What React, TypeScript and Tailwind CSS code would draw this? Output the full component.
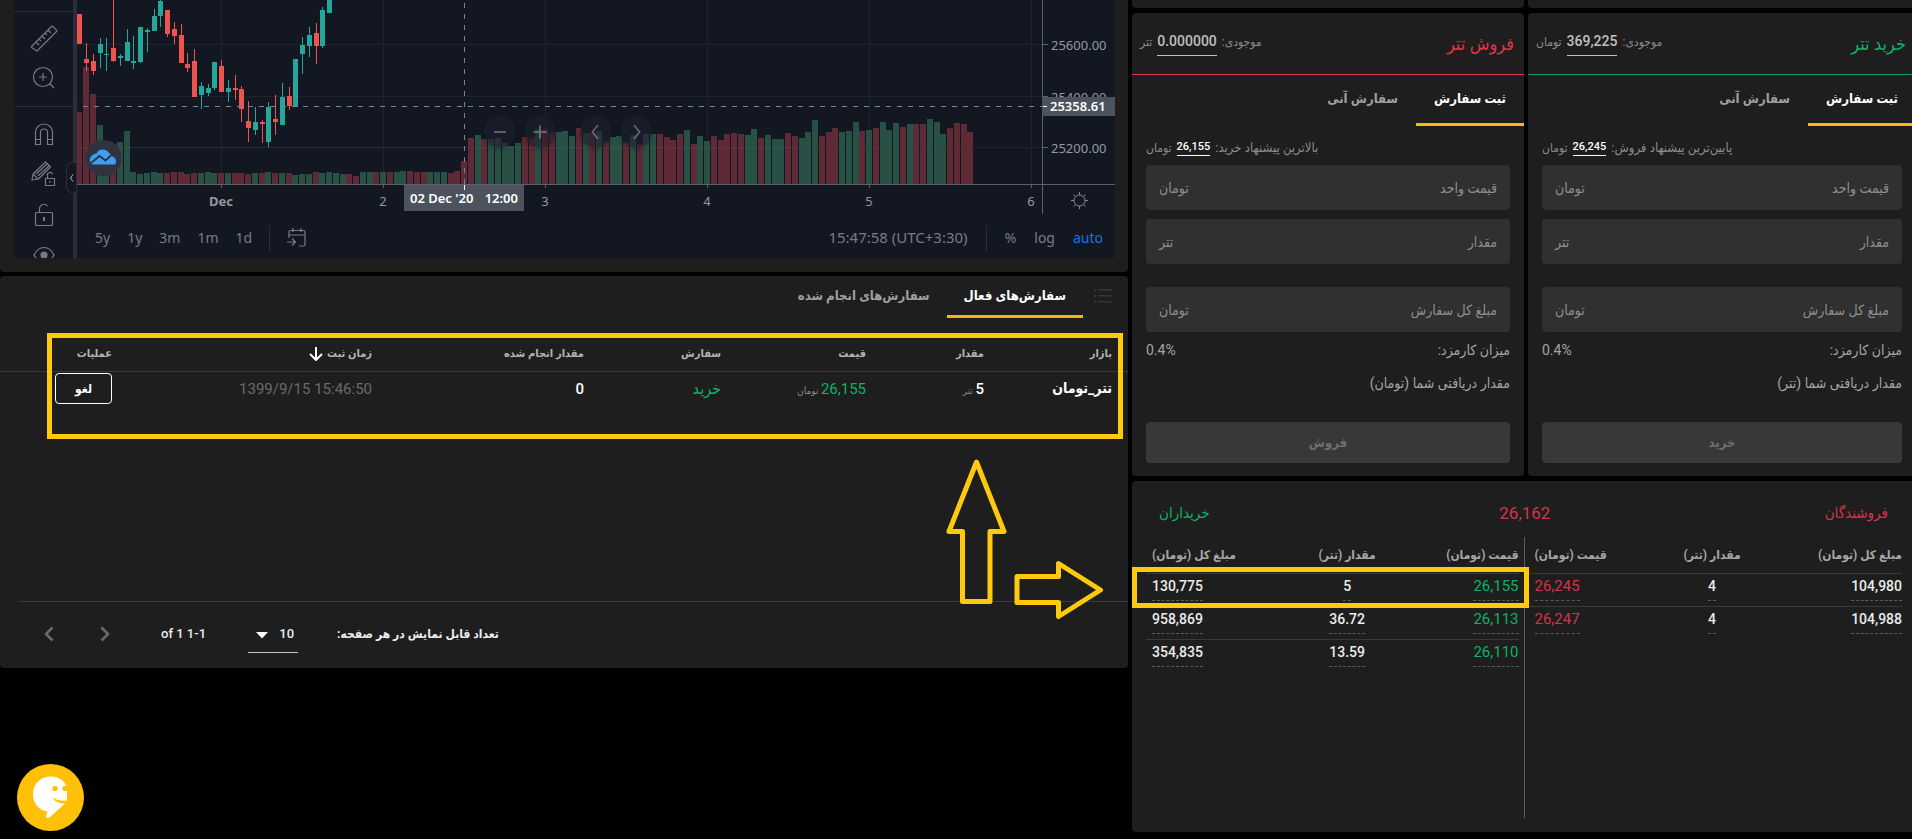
import React from 'react';

const VOLUME =
  'r336 r201 r282 g375 g440 r432 g426 g393 g516 g522 g519 g516 g519 r519 r516 r516 r522 r519 g519 g516 g519 r519 g519 r519 r519 r522 g519 r519 g516 r519 g519 r519 g525 g522 g522 r516 g519 g516 g519 g522 r522 r528 g516 g516 r516 g516 r516 g516 g513 r513 r516 r516 g516 g516 g516 r519 r513 r483 r414 g405 r417 g417 g414 g429 g438 g429 r411 r414 g387 r387 r399 g396 g393 g408 r384 g399 r399 g393 r423 g411 g408 r426 g405 r432 g402 g402 r402 r411 r420 r402 g390 r432 g408 g423 r408 r420 r402 r399 r402 g405 g387 r414 g405 g417 g417 r399 r408 g414 g396 g360 r408 r396 r384 g396 g393 g366 r393 g390 r384 g366 g390 g369 r381 g372 r372 r372 g357 g366 g402 r384 r369 r372 r396'.split(
    ' ',
  );

// [direction, body top, body bottom, wick top, wick bottom], in thirds of a pixel
const CANDLES: [string, number, number, number, number][] = [
  ['r', 42, 132, 42, 132], ['r', 177, 189, 129, 213], ['r', 183, 213, 162, 225], ['g', 132, 159, 114, 204],
  ['g', 161, 164, 114, 213], ['r', 144, 183, 0, 186], ['g', 168, 174, 162, 198], ['g', 126, 183, 87, 183],
  ['g', 183, 189, 108, 207], ['g', 81, 186, 81, 189], ['g', 90, 96, 84, 156], ['g', 48, 93, 27, 93],
  ['g', 3, 48, 0, 81], ['r', 30, 102, 30, 111], ['r', 87, 108, 66, 132], ['r', 105, 189, 72, 189],
  ['r', 192, 204, 159, 216], ['r', 183, 291, 147, 291], ['g', 258, 285, 246, 327], ['g', 264, 279, 252, 288],
  ['g', 186, 264, 186, 270], ['r', 198, 276, 180, 276], ['g', 264, 276, 240, 306], ['r', 264, 270, 225, 300],
  ['r', 267, 327, 258, 366], ['r', 363, 384, 303, 426], ['g', 366, 390, 321, 405], ['r', 366, 372, 360, 429],
  ['g', 321, 426, 306, 441], ['r', 357, 366, 285, 405], ['g', 291, 375, 249, 375], ['r', 288, 318, 261, 330],
  ['g', 177, 321, 177, 321], ['g', 135, 162, 111, 222], ['g', 105, 138, 81, 171], ['r', 99, 138, 69, 192],
  ['g', 30, 138, 21, 144], ['g', 0, 39, 0, 39],
];

const barX = (k: number) => Math.round(2.25 + 6.75 * k);
const DAYS: [number, string][] = [
  [144, 'Dec'], [306, '2'], [468, '3'], [630, '4'], [792, '5'], [954, '6'],
];
const PRICES: [number, string][] = [
  [44, '25600.00'], [96, '25400.00'], [147, '25200.00'],
];

function PriceChart() {
  return (
    <svg className="block h-[214px] w-full [font-family:'Noto_Sans',sans-serif]" fontSize="13" fill="#9598a1" role="img" aria-label="USDT price chart">
      <g shapeRendering="crispEdges">
        {PRICES.map(([y]) => (
          <rect key={y} x="0" y={y} width="965" height="1" fill="#1f232e" />
        ))}
        {DAYS.map(([x]) => (
          <rect key={x} x={x} y="0" width="1" height="184" fill="#1f232e" />
        ))}
        {VOLUME.map((v, k) => {
          const top = Math.round(Number(v.slice(1)) / 3);
          return <rect key={k} x={barX(k) - 3} y={top} width="6" height={184 - top} fill={v[0] === 'r' ? '#5d2a35' : '#285045'} />;
        })}
        <rect x="0" y="147" width="720" height="1" fill="#fff" opacity="0.05" />
        {CANDLES.map(([d, t, b, wt, wb], k) => {
          const c = d === 'r' ? '#ef5350' : '#26a69a';
          return (
            <g key={k} fill={c}>
              <rect x={barX(k)} y={Math.round(wt / 3)} width="1" height={Math.round((wb - wt) / 3)} />
              <rect x={barX(k) - 2} y={Math.round(t / 3)} width="5" height={Math.max(1, Math.round((b - t) / 3))} />
            </g>
          );
        })}
        <path d="M0 106.5H965" stroke="#758696" strokeDasharray="5 6" strokeDashoffset="5" />
        <path d="M387.5 3V184" stroke="#758696" strokeDasharray="5 6" />
        <rect x="0" y="184" width="1038" height="1" fill="#5d606b" />
        <rect x="965" y="0" width="1" height="214" fill="#5d606b" />
        {DAYS.map(([x]) => (
          <rect key={x} x={x} y="185" width="1" height="3" fill="#5d606b" />
        ))}
        {PRICES.map(([y]) => (
          <rect key={y} x="966" y={y} width="5" height="1" fill="#5d606b" />
        ))}
      </g>
      {DAYS.map(([x, t]) => (
        <text key={t} x={x} y="206" textAnchor="middle" fontWeight={t === 'Dec' ? 700 : 400}>{t}</text>
      ))}
      {PRICES.map(([y, t]) => (
        <text key={t} x="974" y={y + 6}>{t}</text>
      ))}
      <rect x="965" y="97" width="73" height="19" fill="#4c525e" />
      <rect x="966" y="106" width="4" height="1" fill="#fff" />
      <text x="973" y="111" fill="#fff" fontWeight="600">25358.61</text>
      <rect x="327" y="185" width="120" height="26" fill="#4c525e" />
      <rect x="387" y="185" width="1" height="5" fill="#fff" />
      <text x="333" y="203" fill="#fff" fontWeight="600">02 Dec '20</text>
      <text x="441" y="203" fill="#fff" fontWeight="600" textAnchor="end">12:00</text>
      <g stroke="#868993" fill="none">
        <circle cx="1002.500" cy="200.500" r="5.500" />
        <path d="M1002.500 192v3M1002.500 206v3M994 200.500h3M1008 200.500h3M996.500 194.500l2 2M1006.500 204.500l2 2M996.500 206.500l2-2M1006.500 196.500l2-2" />
      </g>
      <circle cx="26.500" cy="158" r="18" fill="#2f3241" />
      <path d="M15 164.500a6 6 0 0 1 1.500-10 4 4 0 0 1 3-1 7 7 0 0 1 12.500-.5 5.500 5.500 0 0 1 3.500 3.500 5 5 0 0 1 2.500 8z" fill="#3ba0f3" />
      <path d="m14 163 8.500-7 6 4.500 7-6.500" fill="none" stroke="#2f3241" strokeWidth="1.800" />
    </svg>
  );
}

function ToolButton({ label, children }: { label: string; children: React.ReactNode }) {
  return (
    <button aria-label={label} className="flex h-10 w-full shrink-0 items-center justify-center text-[#787b86]">
      <svg width="28" height="28" viewBox="0 0 28 28" fill="none" stroke="currentColor" strokeWidth="1.200" strokeLinejoin="round">
        {children}
      </svg>
    </button>
  );
}

function DrawingToolbar() {
  return (
    <div className="relative h-[258px] w-[63px] shrink-0 border-r-4 border-[#2a2e39]">
      <div className="h-full overflow-hidden">
        <div className="mt-[11px] border-y border-[#2a2e39] pt-[6px] pb-[8px]">
          <ToolButton label="Ruler">
            <path d="M1.500 22.500 21.500 2.500a1 1 0 0 1 1.400 0l3.600 3.600a1 1 0 0 1 0 1.400L7.500 26.500a1 1 0 0 1-1.400 0L1.500 23.500zM6 18l3 3M9 15l2 2M12 12l3 3M15 9l2 2M18 6l3 3" />
          </ToolButton>
          <ToolButton label="Zoom in">
            <circle cx="13" cy="13" r="9.500" />
            <path d="M13 9v8M9 13h8M20 20l4 4" />
          </ToolButton>
        </div>
        <div className="pt-[7px]">
          <ToolButton label="Magnet">
            <path d="M5.500 24.500v-12a8.500 8.500 0 0 1 17 0v12h-5v-12a3.500 3.500 0 0 0-7 0v12zM5.500 19.500h5M17.500 19.500h5" />
          </ToolButton>
          <ToolButton label="Stay in drawing mode">
            <path d="m2 20 1-6L15.500 2l5 5L8.500 19zM3 14l5 5M6 14 17 4M8 16 19 6" />
            <path d="M15.500 18.500h9v7h-9zM17.500 18.500v-3a2.500 2.500 0 0 1 5-1M20 21v2" />
          </ToolButton>
          <ToolButton label="Lock drawings">
            <rect x="5.500" y="12.500" width="17" height="13" rx="1" />
            <path d="M9.500 12.500v-4a4.500 4.500 0 0 1 8-2.500" />
            <path d="M14 17v4" strokeWidth="2" />
          </ToolButton>
          <ToolButton label="Hide drawings">
            <path d="M4 15c5-10 15-10 20 0-5 9-15 9-20 0z" />
            <circle cx="14" cy="15" r="3" fill="currentColor" />
          </ToolButton>
        </div>
      </div>
      <button aria-label="Hide toolbar" className="absolute top-[162px] left-[52px] flex h-[31px] w-[10px] items-center justify-center rounded-l-md border border-r-0 border-[#2a2e39] bg-[#131722]">
        <svg width="5" height="8" viewBox="0 0 5 8" fill="none" stroke="#b2b5be"><path d="M4 .5 1.500 4 4 7.500" /></svg>
      </button>
    </div>
  );
}

function ChartNavButton({ label, d }: { label: string; d: string }) {
  return (
    <button aria-label={label} className="flex size-8 items-center justify-center rounded-full bg-[#1e1e2d]/60 shadow-md">
      <svg width="18" height="18" viewBox="0 0 18 18" fill="none" stroke="#b2b5be" strokeOpacity="0.450" strokeWidth="2"><path d={d} /></svg>
    </button>
  );
}

function ChartPanel() {
  return (
    <section dir="ltr" className="overflow-hidden rounded-b bg-[#1e1e1e] pr-[13px] pb-[14px] pl-[14px]">
      <div className="flex h-[258px] bg-[#131722]">
        <DrawingToolbar />
        <div className="relative min-w-0 flex-1">
          <PriceChart />
          <div className="absolute top-[116px] left-[407px] flex gap-[8px]">
            <ChartNavButton label="Zoom out" d="M3 9h12" />
            <ChartNavButton label="Zoom in" d="M2.500 9h13M9 2.500v13" />
            <div className="ml-[16px] flex gap-[8px]">
              <ChartNavButton label="Scroll left" d="M11 2 5.500 9l5.500 7" />
              <ChartNavButton label="Scroll right" d="m7 2 5.500 7L7 16" />
            </div>
          </div>
          <div className="flex h-[44px] items-center justify-between pt-1 pr-3 pl-[18px] text-sm text-[#787b86] [font-family:'Noto_Sans',sans-serif]">
            <div className="flex items-center gap-[17px]">
              <button>5y</button>
              <button>1y</button>
              <button>3m</button>
              <button>1m</button>
              <button>1d</button>
              <span className="h-[25px] w-px bg-[#2a2e39]" />
              <button aria-label="Go to date">
                <svg width="20" height="20" viewBox="0 0 20 20" fill="none" stroke="currentColor" strokeWidth="1.200">
                  <path d="M2 10V4a1.500 1.500 0 0 1 1.500-1.500h13A1.500 1.500 0 0 1 18 4v12.500a1.500 1.500 0 0 1-1.500 1.500H12M2 7h16M6 0v4M14 0v4M0 14h8M5 10.500 8.500 14 5 17.500" />
                </svg>
              </button>
            </div>
            <div className="flex items-center gap-[18px]">
              <button className="text-[15px]">15:47:58 (UTC+3:30)</button>
              <span className="h-[25px] w-px bg-[#2a2e39]" />
              <button>%</button>
              <button>log</button>
              <button className="text-[#1a73e0]">auto</button>
            </div>
          </div>
        </div>
      </div>
    </section>
  );
}

function OrdersPanel() {
  return (
    <section className="flex h-[392px] flex-col rounded bg-[#1e1e1e]">
      <div className="flex h-[42px] text-[13px] font-bold">
        <div className="flex w-[45px] items-center justify-center pr-[5px] pb-[3px]">
          <svg width="18" height="14" viewBox="0 0 18 14" fill="#363636">
            <path d="M4 0h14v1.500H4zM4 6h14v1.500H4zM4 12h14v1.500H4zM0 0h2v2H0zM0 6h2v2H0zM0 12h2v2H0z" />
          </svg>
        </div>
        <button className="border-b-3 border-[#f5b70c] px-[17px] text-white">سفارش‌های فعال</button>
        <button className="border-b-3 border-transparent px-[17px] text-[#a0a0a0]">سفارش‌های انجام شده</button>
      </div>
      <table className="mt-[15px] w-full table-fixed text-right text-[15px]">
        <colgroup>
          <col className="w-[128px]" />
          <col className="w-[118px]" />
          <col className="w-[145px]" />
          <col className="w-[137px]" />
          <col className="w-[212px]" />
          <col className="w-[260px]" />
          <col className="w-[128px]" />
        </colgroup>
        <thead>
          <tr className="h-[38px] border-b border-[#3a3a3a] text-[11px] text-[#b4b4b4] [&>th]:pt-[5px] [&>th]:pr-[16px]">
            <th>بازار</th>
            <th>مقدار</th>
            <th>قیمت</th>
            <th>سفارش</th>
            <th>مقدار انجام شده</th>
            <th>
              <button className="flex items-center gap-1">
                زمان ثبت
                <svg width="14" height="14" viewBox="0 0 14 14" fill="none" stroke="#fff" strokeWidth="2"><path d="M7 0v13M1 7l6 6 6-6" /></svg>
              </button>
            </th>
            <th>عملیات</th>
          </tr>
        </thead>
        <tbody>
          <tr className="h-[35px] [&>td]:pr-[16px]">
            <td className="text-[14px] font-bold text-white">تتر_تومان</td>
            <td className="font-medium text-white">5<span className="text-[10px] font-normal text-[#8a8a8a]"> تتر</span></td>
            <td className="text-[#0bb367]">26,155<span className="text-[10px] text-[#8a8a8a]"> تومان</span></td>
            <td className="text-base text-[#0bb367]">خرید</td>
            <td className="font-medium text-white">0</td>
            <td className="text-[#6b6b6b]"><bdi dir="ltr">1399/9/15 15:46:50</bdi></td>
            <td>
              <button className="block h-[31px] w-[57px] rounded border border-white text-[12px] font-bold text-white">لغو</button>
            </td>
          </tr>
        </tbody>
      </table>
      <div className="mt-auto mr-0 ml-[19px] flex h-[67px] items-center justify-end border-t border-[#3a3a3a] pb-[2px] text-[13px] font-medium text-[#ececec]">
        <label htmlFor="rows" className="text-[12px] font-bold">تعداد قابل نمایش در هر صفحه:</label>
        <div className="relative mr-[39px]">
          <select id="rows" defaultValue="10" className="block h-[37px] w-[50px] appearance-none border-b border-[#c8c8c8] bg-transparent pr-1 outline-none">
            <option>10</option>
          </select>
          <svg className="pointer-events-none absolute top-[16px] left-[8px]" width="12" height="7" viewBox="0 0 12 7" fill="#fff"><path d="M0 0h12L6 6.500z" /></svg>
        </div>
        <span className="mr-[42px]">1-1 of 1</span>
        <button aria-label="Previous page" className="mr-[51px] text-[#6b6b6b]">
          <svg width="10" height="16" viewBox="0 0 10 16" fill="none" stroke="currentColor" strokeWidth="2.500"><path d="m1.500 1.500 6.500 6.500-6.500 6.500" /></svg>
        </button>
        <button aria-label="Next page" className="mr-[46px] ml-[25px] text-[#6b6b6b]">
          <svg width="10" height="16" viewBox="0 0 10 16" fill="none" stroke="currentColor" strokeWidth="2.500"><path d="M8.500 1.500 2 8l6.500 6.500" /></svg>
        </button>
      </div>
    </section>
  );
}

type TradeProps = {
  id: string;
  title: string;
  titleClass: string;
  headerClass: string;
  balance: string;
  balanceUnit: string;
  hint: string;
  hintPrice: string;
  receive: string;
  action: string;
};

function Field({ id, label, unit }: { id: string; label: string; unit: string }) {
  return (
    <label htmlFor={id} className="flex h-[45px] items-center rounded bg-[#303030] px-[13px] text-sm text-[#8f8f8f]">
      <input id={id} aria-label={label} placeholder={label} className="min-w-0 flex-1 bg-transparent outline-none placeholder:text-[#8f8f8f]" />
      <span>{unit}</span>
    </label>
  );
}

function TradePanel(p: TradeProps) {
  return (
    <section className="flex h-[463px] flex-col rounded bg-[#1e1e1e]">
      <header className={p.headerClass}>
        <h2 className={p.titleClass}>{p.title}</h2>
        <p className="flex items-baseline gap-[5px] text-[12px] text-[#8c8c8c]">
          <span>موجودی:</span>
          <span className="border-b border-[#c0c0c0] pb-[4px] text-sm font-medium text-[#c0c0c0]">{p.balance}</span>
          <span>{p.balanceUnit}</span>
        </p>
      </header>
      <div className="flex h-[51px] text-[13px] font-bold">
        <button className="border-b-3 border-[#f9b90c] px-[18px] text-white">ثبت سفارش</button>
        <button className="border-b-3 border-transparent px-[18px] text-[#a0a0a0]">سفارش آنی</button>
      </div>
      <div className="flex flex-1 flex-col px-[14px] pb-[13px]">
        <p className="flex h-[39px] items-center justify-end gap-[5px] pt-[4px] text-[12px] text-[#8c8c8c]">
          <span className="text-[13px]">{p.hint}</span>
          <span className="border-b border-white text-[11px] font-medium text-white">{p.hintPrice}</span>
          <span>تومان</span>
        </p>
        <div className="flex flex-col gap-[9px]">
          <Field id={p.id + '-price'} label="قیمت واحد" unit="تومان" />
          <Field id={p.id + '-amount'} label="مقدار" unit="تتر" />
        </div>
        <div className="mt-[23px]">
          <Field id={p.id + '-total'} label="مبلغ کل سفارش" unit="تومان" />
        </div>
        <div className="mt-[8px] flex items-center justify-between text-sm text-[#a6a6a6]">
          <span>میزان کارمزد:</span>
          <span dir="ltr">0.4%</span>
        </div>
        <p className="mt-[13px] text-sm text-[#a6a6a6]">{p.receive}</p>
        <button className="mt-auto h-[41px] rounded bg-[#383838] text-[13px] font-bold text-[#6f6f6f]">{p.action}</button>
      </div>
    </section>
  );
}

const cellText = 'inline-block border-b border-dashed border-[#5c5c5c] pb-[4px] align-top leading-5';

function OrderBook() {
  return (
    <section className="flex h-[351px] flex-col rounded bg-[#1e1e1e]">
      <div className="flex h-[56px] items-center justify-between pt-[9px] pr-[28px] pl-[27px] text-[15px]">
        <h3 className="text-[#d6334c]">فروشندگان</h3>
        <span className="mr-[6px] text-[17px] text-[#d6334c]">26,162</span>
        <h3 className="w-[72px] text-left text-[#0bb367]">خریداران</h3>
      </div>
      <div className="flex h-[281px] px-[14px]">
        <div className="flex-1 pl-[5px]">
          <table className="w-full table-fixed text-[14px] font-medium text-[#ececec]">
            <thead>
              <tr className="h-[36px] border-b border-[#3a3a3a] text-[12px] text-[#a6a6a6]">
                <th className="w-[36%] text-right">مبلغ کل (تومان)</th>
                <th className="w-[30%]">مقدار (تتر)</th>
                <th className="w-[34%] pl-[5px] text-left">قیمت (تومان)</th>
              </tr>
            </thead>
            <tbody className="divide-y divide-[#3a3a3a] [&_td]:pt-[2px] [&_td]:pb-[5px]">
              {[['104,980', '4', '26,245'], ['104,988', '4', '26,247']].map((r) => (
                <tr key={r[2]}>
                  <td><span className={cellText}>{r[0]}</span></td>
                  <td className="text-center"><span className={cellText}>{r[1]}</span></td>
                  <td className="pl-[5px] text-left text-[15px] font-normal text-[#d6334c]"><span className={cellText}>{r[2]}</span></td>
                </tr>
              ))}
            </tbody>
          </table>
        </div>
        <div className="w-px bg-[#5c5c5c]" />
        <div className="flex-1 pr-[5px]">
          <table className="w-full table-fixed text-[14px] font-medium text-[#ececec]">
            <thead>
              <tr className="h-[36px] border-b border-[#3a3a3a] text-[12px] text-[#a6a6a6]">
                <th className="w-[34%] text-right">قیمت (تومان)</th>
                <th className="w-[24%]">مقدار (تتر)</th>
                <th className="w-[42%] pl-[6px] text-left">مبلغ کل (تومان)</th>
              </tr>
            </thead>
            <tbody className="divide-y divide-[#3a3a3a] [&_td]:pt-[2px] [&_td]:pb-[5px]">
              {[['26,155', '5', '130,775'], ['26,113', '36.72', '958,869'], ['26,110', '13.59', '354,835']].map((r) => (
                <tr key={r[0]}>
                  <td className="text-[15px] font-normal text-[#0bb367]"><span className={cellText}>{r[0]}</span></td>
                  <td className="text-center"><span className={cellText}>{r[1]}</span></td>
                  <td className="pl-[6px] text-left"><span className={cellText}>{r[2]}</span></td>
                </tr>
              ))}
            </tbody>
          </table>
        </div>
      </div>
    </section>
  );
}

export default function App() {
  return (
    <main className="relative min-h-screen overflow-hidden bg-black [font-family:Roboto,'DejaVu_Sans_Condensed','DejaVu_Sans',sans-serif]">
      <div className="-mr-1 grid grid-cols-[minmax(0,1128fr)_minmax(0,784fr)] gap-1">
        <div dir="rtl" className="flex flex-col gap-1">
          <ChartPanel />
          <OrdersPanel />
        </div>
        <div className="flex flex-col gap-[5px]">
          <div className="grid grid-cols-[minmax(0,392fr)_minmax(0,388fr)] gap-x-1 gap-y-[5px]">
            <div className="h-2 rounded-b bg-[#1e1e1e]" />
            <div className="h-2 rounded-b bg-[#1e1e1e]" />
            <div dir="rtl">
              <TradePanel
                id="sell"
                title="فروش تتر"
                titleClass="text-[18px] text-[#e0344c]"
                headerClass="flex h-[62px] items-center justify-between border-b border-[#e0344c] pr-[10px] pl-[8px]"
                balance="0.000000"
                balanceUnit="تتر"
                hint="بالاترین پیشنهاد خرید:"
                hintPrice="26,155"
                receive="مقدار دریافتی شما (تومان)"
                action="فروش"
              />
            </div>
            <div dir="rtl">
              <TradePanel
                id="buy"
                title="خرید تتر"
                titleClass="text-[18px] text-[#0bb367]"
                headerClass="flex h-[62px] items-center justify-between border-b border-[#0ba35f] pr-[10px] pl-[8px]"
                balance="369,225"
                balanceUnit="تومان"
                hint="پایین‌ترین پیشنهاد فروش:"
                hintPrice="26,245"
                receive="مقدار دریافتی شما (تتر)"
                action="خرید"
              />
            </div>
          </div>
          <div dir="rtl"><OrderBook /></div>
        </div>
      </div>

      <div className="pointer-events-none absolute top-[333px] left-[47px] h-[106px] w-[1076px] border-5 border-[#ffc90e]" />
      <div className="pointer-events-none absolute top-[567px] left-[1132px] h-[41px] w-[397px] border-5 border-[#ffc90e]" />
      <svg className="pointer-events-none absolute top-[455px] left-[940px]" width="170" height="170" viewBox="940 455 170 170" fill="none" stroke="#ffc90e" strokeWidth="5" strokeLinejoin="round">
        <path d="M976.500 462 1004 531.500H990v70H962.500v-70H949z" />
        <path d="M1017 576.500h41.500v-13l42 26.500-42 26.500v-14H1017z" />
      </svg>

      <button aria-label="Open chat" className="absolute bottom-[8px] left-[17px] flex size-[67px] items-center justify-center rounded-full bg-[#ffc107]">
        <svg width="67" height="67" viewBox="0 0 67 67">
          <path d="M33.500 12.500C23.500 12.500 16 20 16 30c0 9.500 6 16.500 14.500 17.500-.5 2-1.500 4-1.500 5.500 1 2 3 .5 4 0l15-13.500c-5 0-10-1.500-13-6 4 2.500 8 3.500 15 3V26c0-8-7.500-13.500-16.500-13.500z" fill="#fff" />
          <circle cx="38" cy="24.500" r="2.700" fill="#ffc107" />
          <circle cx="48" cy="24.500" r="2.700" fill="#ffc107" />
        </svg>
      </button>
    </main>
  );
}
